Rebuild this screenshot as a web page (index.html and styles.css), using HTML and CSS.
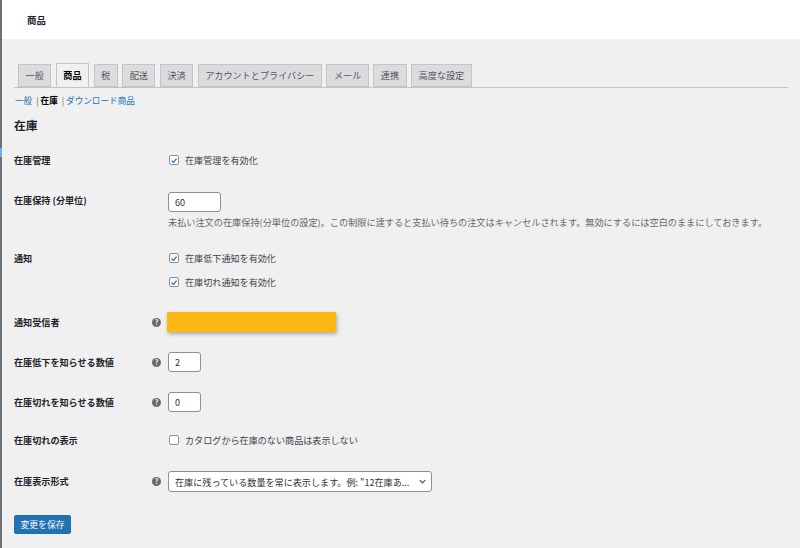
FILE: index.html
```html
<!DOCTYPE html>
<html lang="ja">
<head>
<meta charset="utf-8">
<link rel="stylesheet" href="styles.css">
</head>
<body>
<div class="admin">
  <span class="menu-mark"></span>
  <header class="topbar"><h1 class="page-title">商品</h1></header>
  <main class="wrap">
    <nav class="tabs">
      <span class="tab">一般</span>
      <span class="tab active">商品</span>
      <span class="tab">税</span>
      <span class="tab">配送</span>
      <span class="tab">決済</span>
      <span class="tab">アカウントとプライバシー</span>
      <span class="tab">メール</span>
      <span class="tab">連携</span>
      <span class="tab">高度な設定</span>
    </nav>
    <div class="subnav"><a class="sublink">一般</a><span class="sep">|</span><b class="current">在庫</b><span class="sep">|</span><a class="sublink">ダウンロード商品</a></div>
    <h2 class="section-title">在庫</h2>

    <div class="form">
      <div class="row">
        <div class="label">在庫管理</div><div class="help-col"></div>
        <div class="field"><label class="check"><span class="box checked"><svg viewBox="0 0 10 10" class="tick"><path d="M2 5.2 L4.2 7.3 L8.2 2.6"/></svg></span>在庫管理を有効化</label></div>
      </div>
      <div class="row row-hold">
        <div class="label">在庫保持 (分単位)</div><div class="help-col"></div>
        <div class="field">
          <div class="input w-mid">60</div>
          <p class="desc">未払い注文の在庫保持(分単位の設定)。この制限に達すると支払い待ちの注文はキャンセルされます。無効にするには空白のままにしておきます。</p>
        </div>
      </div>
      <div class="row">
        <div class="label">通知</div><div class="help-col"></div>
        <div class="field stack">
          <label class="check"><span class="box checked"><svg viewBox="0 0 10 10" class="tick"><path d="M2 5.2 L4.2 7.3 L8.2 2.6"/></svg></span>在庫低下通知を有効化</label>
          <label class="check"><span class="box checked"><svg viewBox="0 0 10 10" class="tick"><path d="M2 5.2 L4.2 7.3 L8.2 2.6"/></svg></span>在庫切れ通知を有効化</label>
        </div>
      </div>
      <div class="row">
        <div class="label">通知受信者</div><div class="help-col"><span class="help">?</span></div>
        <div class="field"><div class="redact"></div></div>
      </div>
      <div class="row">
        <div class="label">在庫低下を知らせる数値</div><div class="help-col"><span class="help">?</span></div>
        <div class="field"><div class="input w-small">2</div></div>
      </div>
      <div class="row">
        <div class="label">在庫切れを知らせる数値</div><div class="help-col"><span class="help">?</span></div>
        <div class="field"><div class="input w-small">0</div></div>
      </div>
      <div class="row row-hide">
        <div class="label">在庫切れの表示</div><div class="help-col"></div>
        <div class="field"><label class="check"><span class="box"></span>カタログから在庫のない商品は表示しない</label></div>
      </div>
      <div class="row row-format">
        <div class="label">在庫表示形式</div><div class="help-col"><span class="help">?</span></div>
        <div class="field"><div class="select"><span class="select-text">在庫に残っている数量を常に表示します。例: "12在庫あ...</span><svg class="chev" viewBox="0 0 10 10"><path d="M2 3.5 L5 6.5 L8 3.5"/></svg></div></div>
      </div>
    </div>
    <button class="save" type="button">変更を保存</button>
  </main>
</div>
</body>
</html>
```

FILE: styles.css
```css
html, body {
  margin: 0;
  padding: 0;
}
body {
  background: #f0f0f1;
  font-family: "Noto Sans CJK JP", "Noto Sans", sans-serif;
  color: #1d2327;
  font-size: 9.1px;
}
.admin {
  position: relative;
  min-height: 548px;
  border-left: 2px solid #6e7277;
  box-sizing: border-box;
}
.menu-mark {
  position: absolute;
  left: -2px;
  top: 148px;
  width: 2px;
  height: 9px;
  background: #72aee6;
}
.topbar {
  background: #fff;
  height: 39px;
  display: flex;
  align-items: center;
  padding-left: 25px;
}
.page-title {
  margin: 0;
  font-size: 9.4px;
  font-weight: 700;
  color: #1d2327;
}
.wrap {
  padding: 25px 12px 0 12px;
}
.tabs {
  display: flex;
  gap: 4.5px;
  padding-left: 4px;
  border-bottom: 1px solid #c3c4c7;
  height: 23px;
}
.tab {
  box-sizing: border-box;
  height: 23px;
  line-height: 21px;
  padding: 0 6.5px;
  border: 1px solid #c3c4c7;
  background: #dcdcde;
  color: #50575e;
  font-size: 9.15px;
  white-space: nowrap;
}
.tab.active {
  background: #f0f0f1;
  border-bottom-color: #f0f0f1;
  color: #000;
  font-weight: 700;
  height: 24px;
  margin-top: -1px;
  line-height: 22px;
}
.subnav {
  margin-top: 5px;
  padding-left: 1px;
  font-size: 8.6px;
  line-height: 14px;
  color: #50575e;
}
.sublink {
  color: #2271b1;
}
.current {
  color: #000;
  font-weight: 700;
}
.sep {
  color: #646970;
  margin: 0 2px 0 4px;
}
.section-title {
  margin: 9px 0 0 0;
  font-size: 11.8px;
  font-weight: 700;
  line-height: 18px;
}
.form {
  margin-top: 6px;
}
.row {
  display: grid;
  grid-template-columns: 137px 17px 1fr;
  padding: 10px 0;
}
.row-hold {
  padding-top: 12px;
  padding-bottom: 8px;
}
.row-hide {
  padding-top: 8px;
}
.row-format {
  padding-top: 11px;
}
.label {
  font-weight: 700;
  line-height: 20px;
  font-size: 9.1px;
  color: #1d2327;
  white-space: nowrap;
}
.row-hold .label {
  line-height: 16px;
}
.help-col {
  display: flex;
  align-items: center;
  height: 20px;
}
.help {
  width: 9px;
  height: 9px;
  border-radius: 50%;
  background: #646970;
  color: #fff;
  font-size: 7px;
  font-weight: 700;
  line-height: 9px;
  text-align: center;
  margin-left: 1px;
}
.field {
  min-width: 0;
}
.stack {
  display: flex;
  flex-direction: column;
  gap: 4px;
}
.check {
  display: flex;
  align-items: center;
  height: 20px;
  color: #3c434a;
  font-size: 9.1px;
  white-space: nowrap;
}
.box {
  box-sizing: border-box;
  width: 10px;
  height: 10px;
  border: 1px solid #8c8f94;
  border-radius: 2px;
  background: #fff;
  margin-left: 1px;
  margin-right: 6px;
  display: flex;
  align-items: center;
  justify-content: center;
}
.tick {
  width: 9px;
  height: 9px;
  fill: none;
  stroke: #2271b1;
  stroke-width: 1.6;
}
.input {
  box-sizing: border-box;
  height: 20px;
  border: 1px solid #8c8f94;
  border-radius: 3px;
  background: #fff;
  padding-left: 6px;
  line-height: 18px;
  font-size: 9.1px;
  color: #2c3338;
}
.w-mid {
  width: 53px;
}
.w-small {
  width: 33px;
}
.desc {
  margin: 2px 0 0 0;
  line-height: 16px;
  color: #646970;
  font-size: 9.17px;
  white-space: nowrap;
}
.redact {
  width: 169px;
  height: 20px;
  margin-left: -1px;
  background: #fdb913;
  box-shadow: 1px 2px 4px rgba(0, 0, 0, 0.3);
}
.select {
  box-sizing: border-box;
  width: 264px;
  height: 21px;
  border: 1px solid #8c8f94;
  border-radius: 3px;
  background: #fff;
  display: flex;
  align-items: center;
  padding: 0 4px 0 6px;
  color: #2c3338;
}
.select-text {
  flex: 1;
  overflow: hidden;
  white-space: nowrap;
  font-size: 9.1px;
}
.chev {
  width: 9px;
  height: 9px;
  fill: none;
  stroke: #50575e;
  stroke-width: 1.4;
}
.save {
  margin-top: 13px;
  width: 57px;
  height: 19px;
  border: 1px solid #2271b1;
  border-radius: 2px;
  background: #2271b1;
  color: #fff;
  font-family: inherit;
  font-size: 8.8px;
  padding: 0;
}
```
